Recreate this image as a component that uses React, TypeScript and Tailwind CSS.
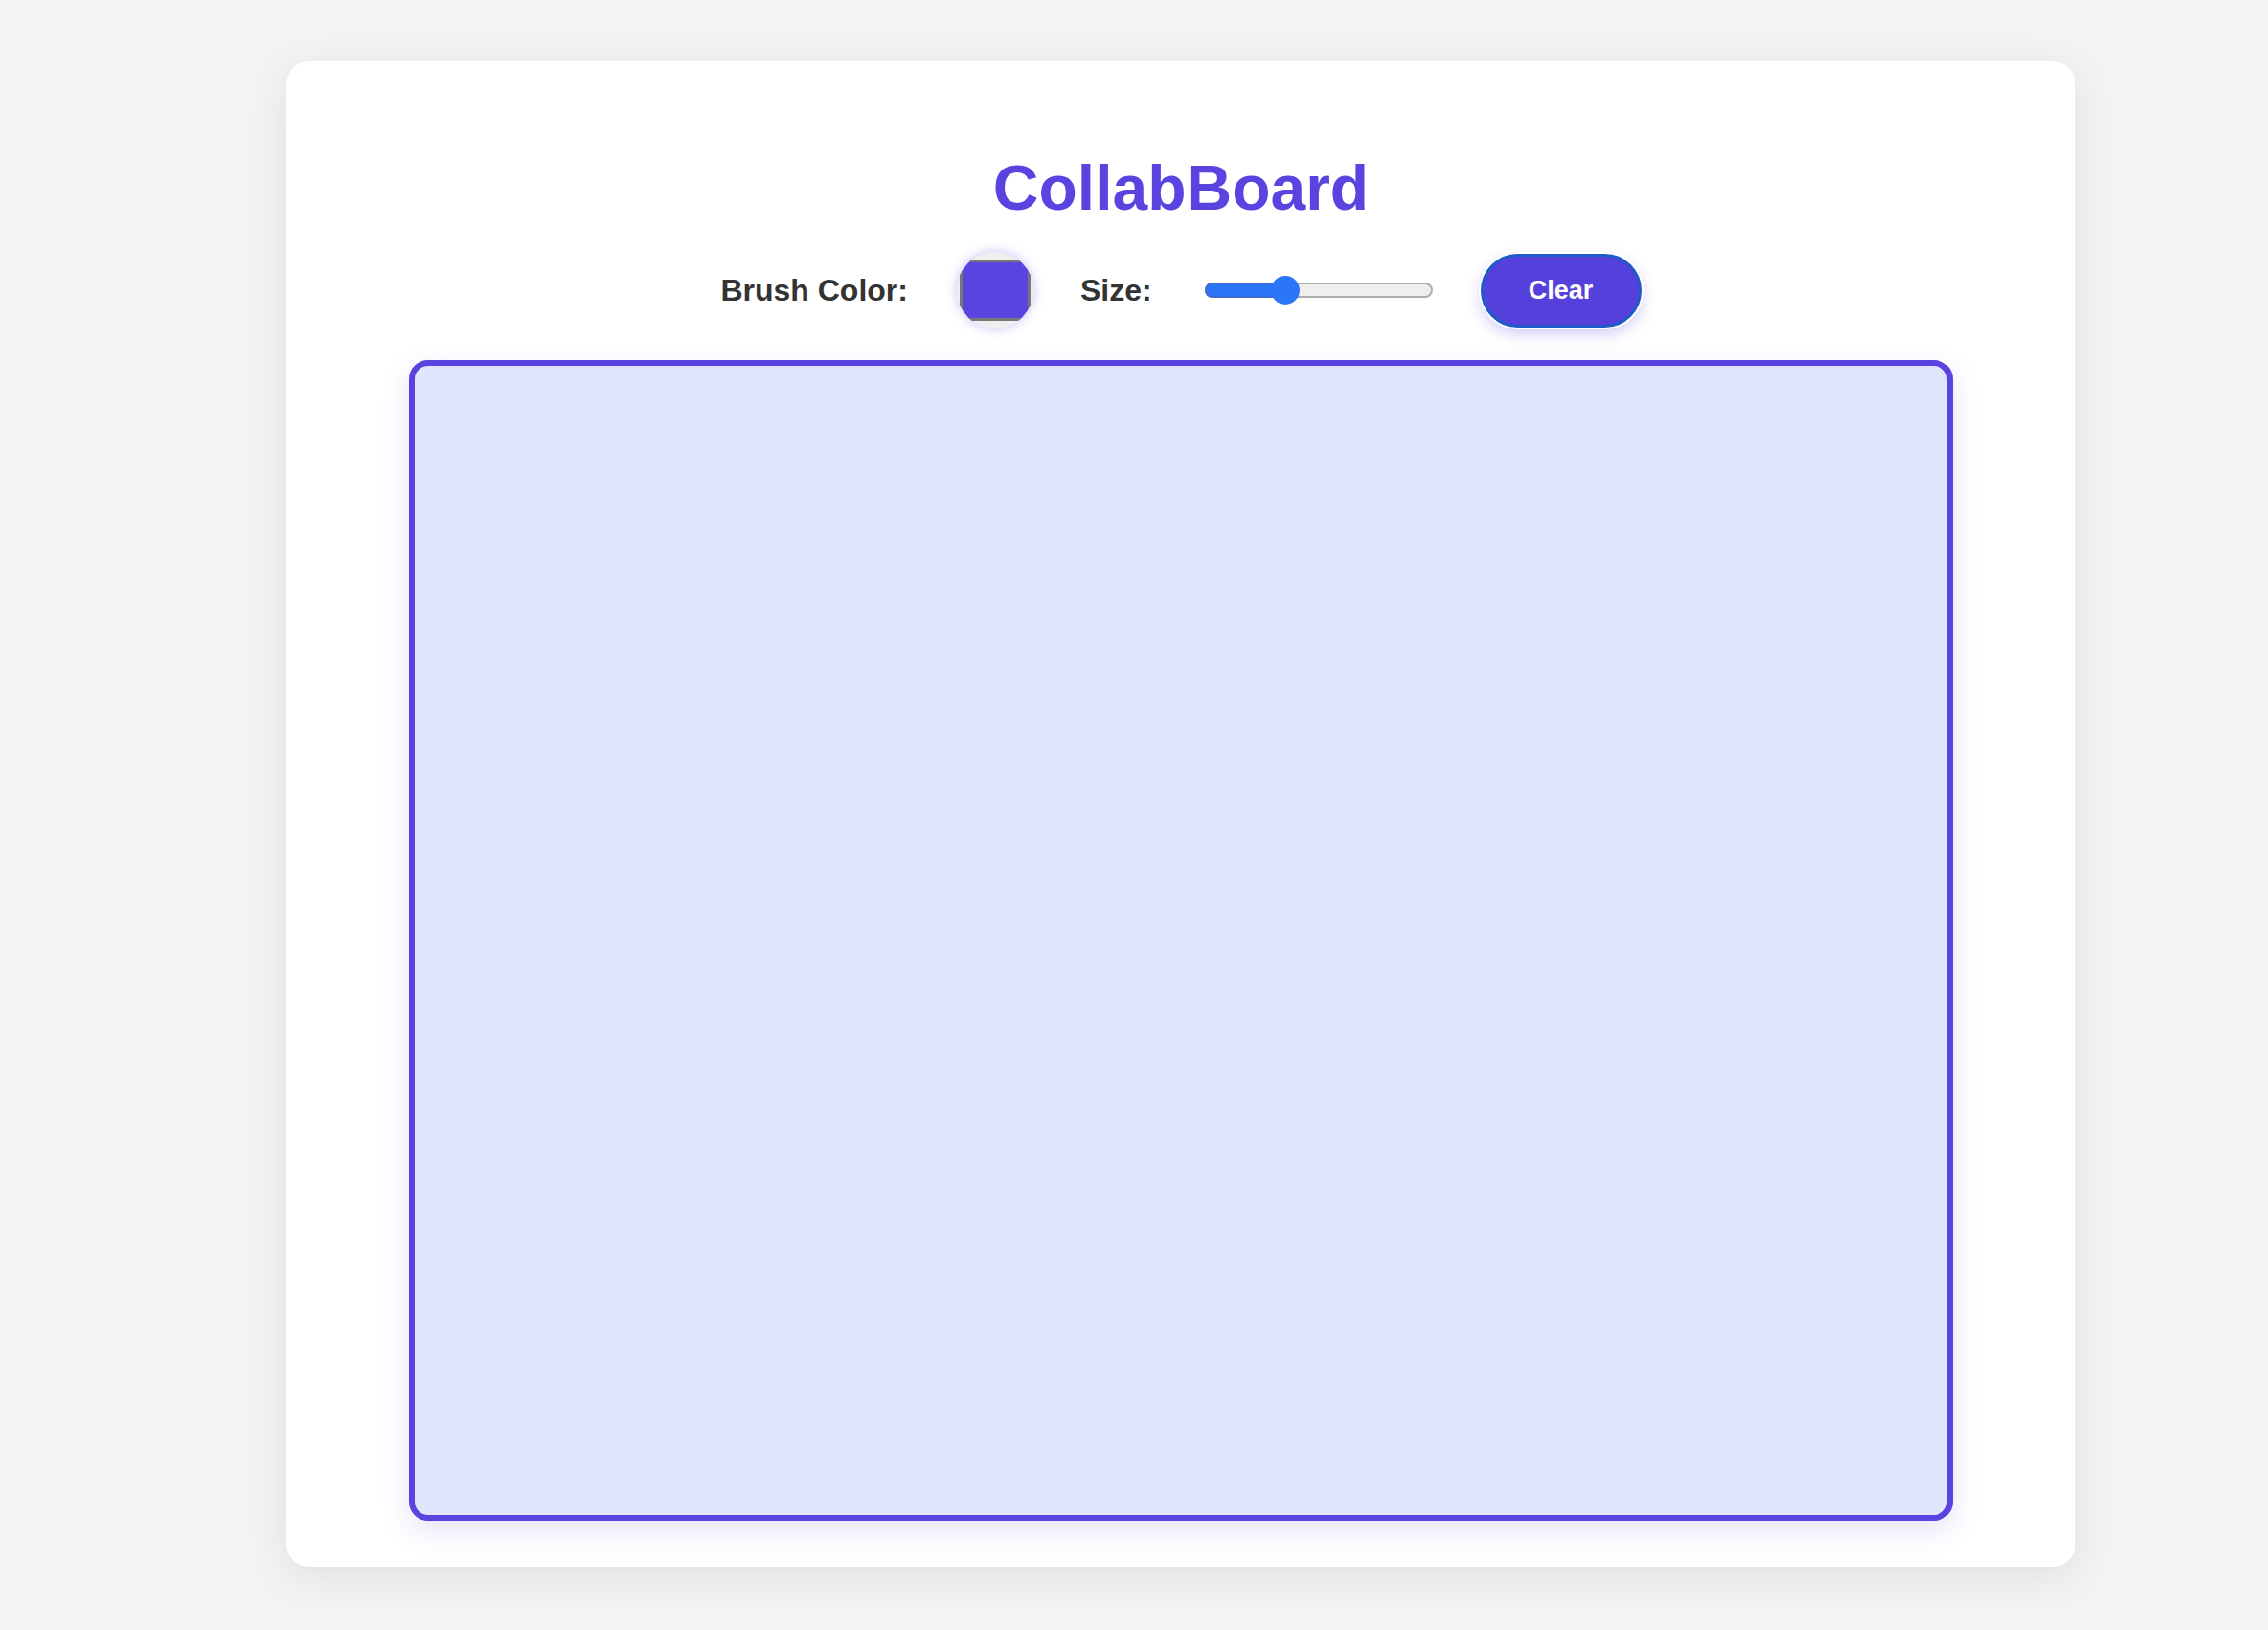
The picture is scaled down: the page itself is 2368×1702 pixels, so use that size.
import React from "react";

export default function App() {
  const font = { fontFamily: '"Liberation Sans", Arial, sans-serif' };
  return (
    <div className="min-h-screen bg-[#f2f3f5] pt-[64px] pl-[299px] pb-[66px]" style={font}>
      <div className="w-[1868px] bg-white rounded-[24px] shadow-[0_10px_40px_rgba(0,0,0,0.08)] px-[128px] pt-[99px] pb-[48px] flex flex-col items-center">
        <h1 className="text-[66px] leading-none h-[66px] font-bold text-[#5a44e0]">CollabBoard</h1>
        <div className="mt-[34px] h-[80px] w-full flex items-center justify-center">
          <span className="text-[32px] leading-none font-bold text-[#333333]">Brush Color:</span>
          <div className="ml-[51px] w-[80px] h-[80px] rounded-full bg-[#efefef] overflow-hidden flex items-center justify-center shadow-[0_0_12px_rgba(90,68,224,0.35)]">
            <div className="w-[74px] h-[64px] shrink-0 border-[3px] border-[#777777] bg-[#5a44e0]" />
          </div>
          <span className="ml-[49px] text-[32px] leading-none font-bold text-[#333333]">Size:</span>
          <div className="ml-[55px] relative w-[238px] h-[30px]">
            <div className="absolute left-0 right-0 top-[7px] h-[16px] rounded-full bg-[#efefef] border-[2px] border-[#adadad]" />
            <div className="absolute left-0 top-[7px] w-[90px] h-[16px] rounded-l-full bg-[#2b76f6] border-[2px] border-r-0 border-[#3b6bd0]" />
            <div className="absolute left-[69px] top-0 w-[30px] h-[30px] rounded-full bg-[#2b76f6]" />
          </div>
          <button className="ml-[50px] w-[168px] h-[77px] rounded-full bg-[#5540dc] border-[3px] border-[#1f5ac8] text-white text-[27px] font-bold shadow-[0_0_0_2px_#ffffff,0_6px_16px_rgba(90,68,224,0.3)]">
            Clear
          </button>
        </div>
        <div className="mt-[33px] w-[1612px] h-[1212px] shrink-0 border-[6px] border-[#5a44e0] rounded-[20px] bg-[#e0e6fe] shadow-[0_10px_30px_rgba(90,68,224,0.15)]" />
      </div>
    </div>
  );
}
